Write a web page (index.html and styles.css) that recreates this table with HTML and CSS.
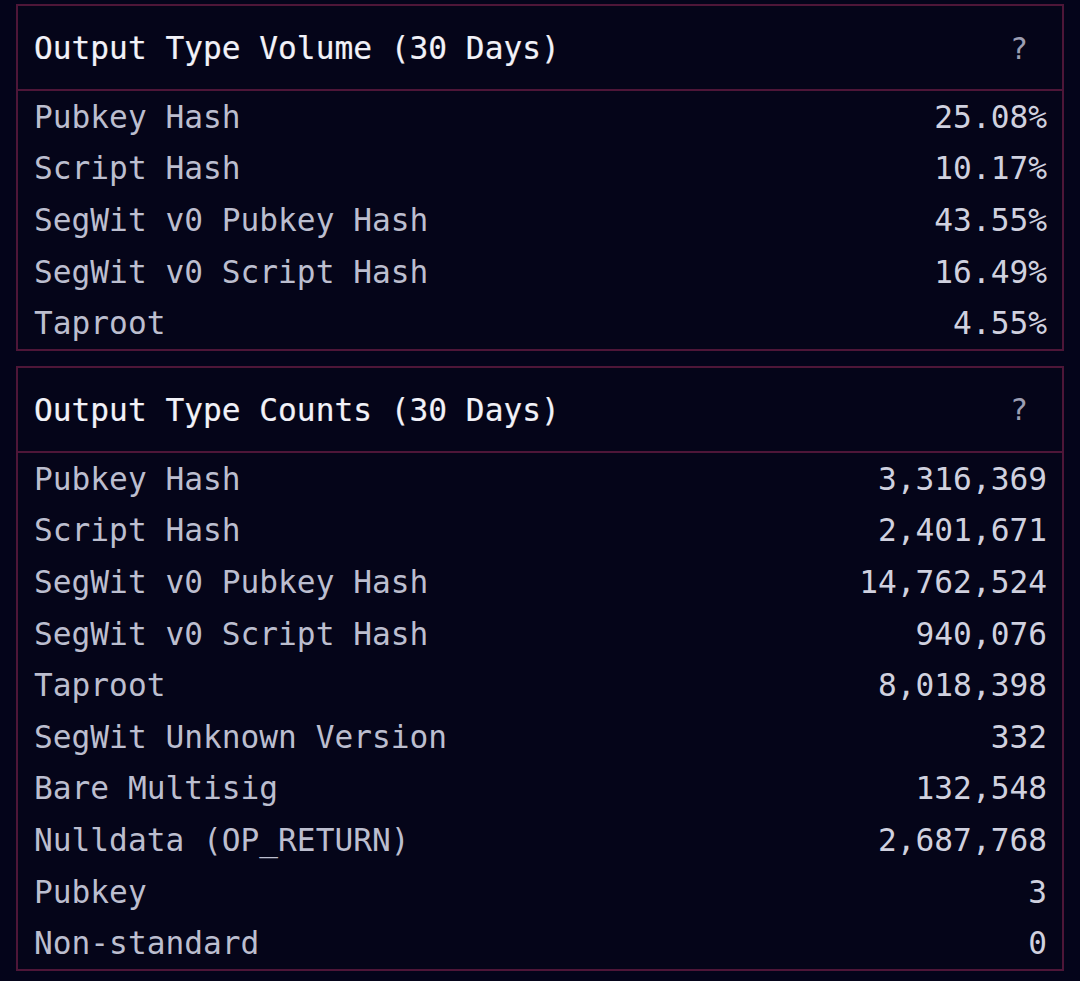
FILE: index.html
```html
<!DOCTYPE html>
<html lang="en">
<head>
<meta charset="utf-8">
<title>Output Types</title>
<link rel="stylesheet" href="styles.css">
</head>
<body>
<main class="page">
  <section class="card">
    <header class="card-head">
      <h2 class="card-title">Output Type Volume (30 Days)</h2>
      <span class="help">?</span>
    </header>
    <div class="rows">
      <div class="row"><span class="label">Pubkey Hash</span><span class="value">25.08%</span></div>
      <div class="row"><span class="label">Script Hash</span><span class="value">10.17%</span></div>
      <div class="row"><span class="label">SegWit v0 Pubkey Hash</span><span class="value">43.55%</span></div>
      <div class="row"><span class="label">SegWit v0 Script Hash</span><span class="value">16.49%</span></div>
      <div class="row"><span class="label">Taproot</span><span class="value">4.55%</span></div>
    </div>
  </section>
  <section class="card">
    <header class="card-head">
      <h2 class="card-title">Output Type Counts (30 Days)</h2>
      <span class="help">?</span>
    </header>
    <div class="rows">
      <div class="row"><span class="label">Pubkey Hash</span><span class="value">3,316,369</span></div>
      <div class="row"><span class="label">Script Hash</span><span class="value">2,401,671</span></div>
      <div class="row"><span class="label">SegWit v0 Pubkey Hash</span><span class="value">14,762,524</span></div>
      <div class="row"><span class="label">SegWit v0 Script Hash</span><span class="value">940,076</span></div>
      <div class="row"><span class="label">Taproot</span><span class="value">8,018,398</span></div>
      <div class="row"><span class="label">SegWit Unknown Version</span><span class="value">332</span></div>
      <div class="row"><span class="label">Bare Multisig</span><span class="value">132,548</span></div>
      <div class="row"><span class="label">Nulldata (OP_RETURN)</span><span class="value">2,687,768</span></div>
      <div class="row"><span class="label">Pubkey</span><span class="value">3</span></div>
      <div class="row"><span class="label">Non-standard</span><span class="value">0</span></div>
    </div>
  </section>
</main>
</body>
</html>
```

FILE: styles.css
```css
html, body {
  margin: 0;
  padding: 0;
  background: #04041a;
}

body {
  font-family: "DejaVu Sans Mono", "Liberation Mono", monospace;
  font-size: 31.2px;
  color: #bcbecf;
}

.page {
  display: flex;
  flex-direction: column;
  gap: 15px;
  padding: 4px 16px 0 16px;
}

.card {
  border: 2px solid #4e1638;
  background: #050519;
}

.card-head {
  display: flex;
  align-items: center;
  justify-content: space-between;
  height: 82px;
  padding: 1px 34px 0 16px;
  border-bottom: 2px solid #4e1638;
}

.card-title {
  margin: 0;
  font-size: inherit;
  font-weight: normal;
  color: #f2f2f8;
  -webkit-text-stroke: 0.2px #f2f2f8;
}

.help {
  color: #9c9eb2;
  font-size: 30px;
}

.rows {
  display: flex;
  flex-direction: column;
}

.row {
  display: flex;
  justify-content: space-between;
  align-items: center;
  height: 51.6px;
  padding: 0 15px 0 16px;
}

.value {
  color: #d0d1df;
}
```
